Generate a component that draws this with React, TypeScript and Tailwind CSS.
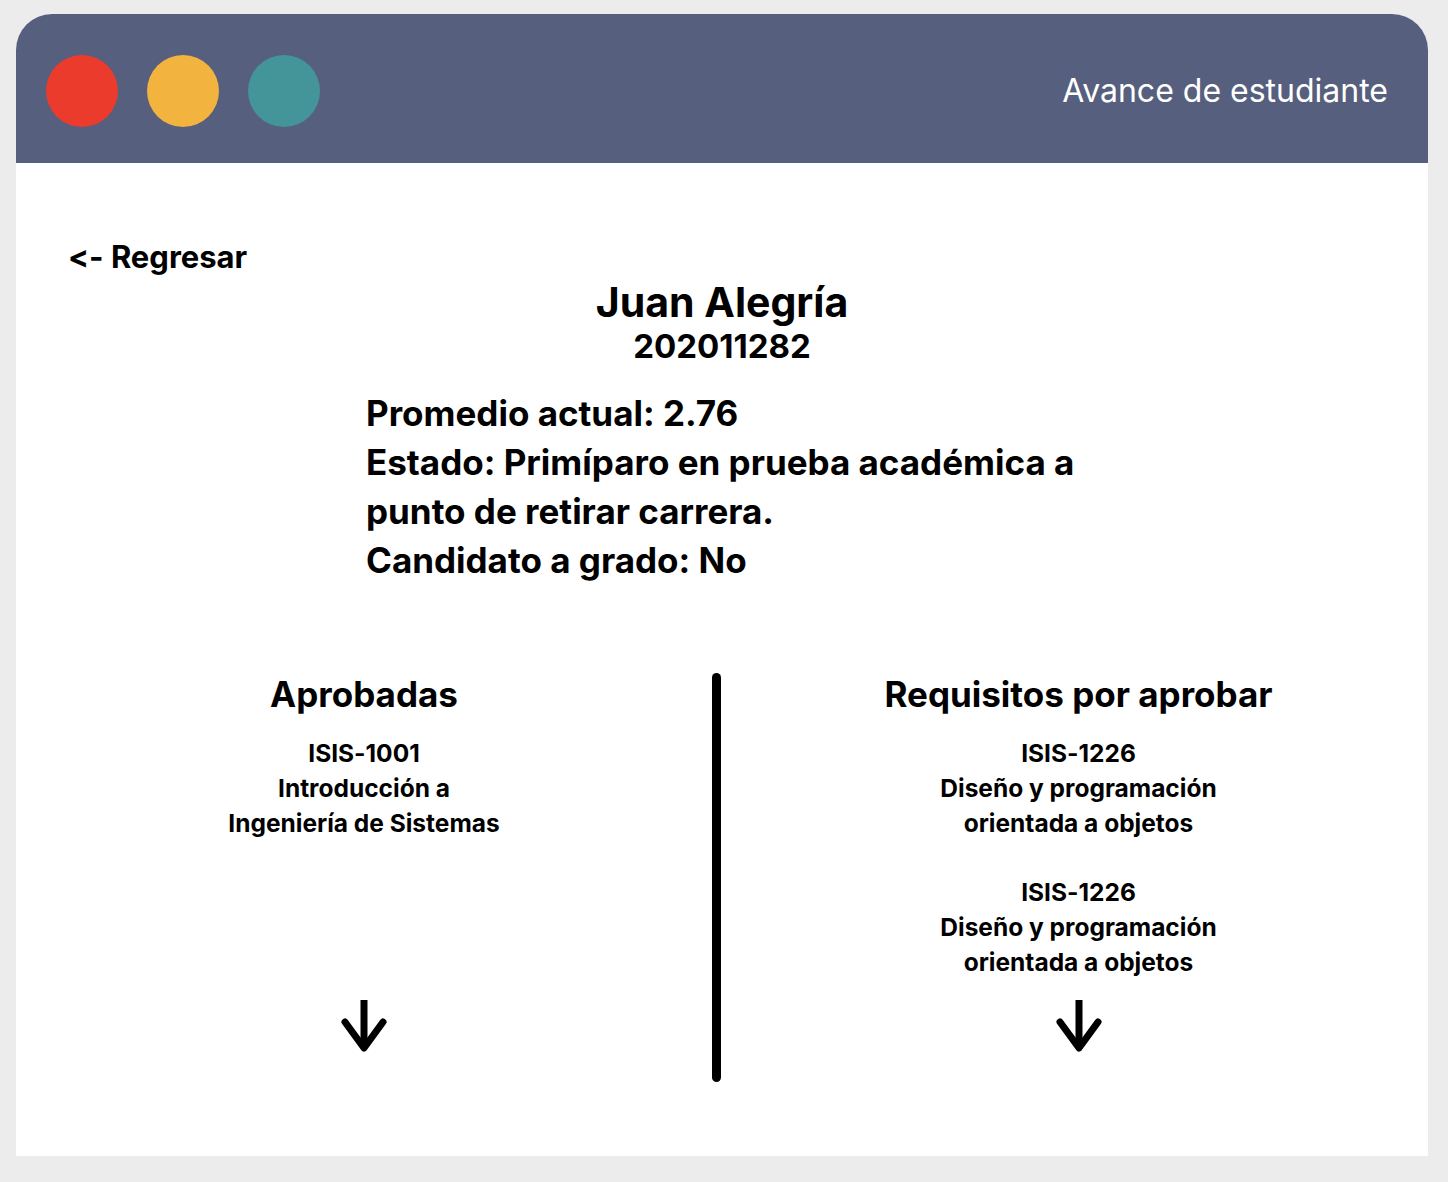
import React from "react";

const font = { fontFamily: "Inter, 'Noto Sans', sans-serif" };

function ArrowDown() {
  return (
    <svg width="48" height="54" viewBox="0 0 48 54" fill="none">
      <path d="M24 1 V48" stroke="black" strokeWidth="7" />
      <path d="M5 23 L24 49 L43 23" stroke="black" strokeWidth="7" strokeLinecap="round" strokeLinejoin="round" />
    </svg>
  );
}

function Course({ code, lines }: { code: string; lines: string[] }) {
  return (
    <div className="text-center text-[24.5px] leading-[35px] font-bold text-black">
      <p>{code}</p>
      {lines.map((l) => (
        <p key={l}>{l}</p>
      ))}
    </div>
  );
}

export default function App() {
  return (
    <div
      className="min-h-[1182px] bg-[#ececec] pt-[14px] pl-[16px] [font-feature-settings:'calt'_0,'liga'_0]"
      style={font}
    >
      <div className="w-[1412px] h-[1142px] bg-white rounded-t-[36px] overflow-hidden flex flex-col">
        {/* title bar */}
        <div className="h-[149px] bg-[#565f7e] flex items-center justify-between pl-[30px] pr-[40px] pt-[5px]">
          <div className="flex gap-[29px]">
            <div className="w-[72px] h-[72px] rounded-full bg-[#eb3b2c]" />
            <div className="w-[72px] h-[72px] rounded-full bg-[#f3b33f]" />
            <div className="w-[72px] h-[72px] rounded-full bg-[#44959a]" />
          </div>
          <span className="text-white text-[32px] font-normal">Avance de estudiante</span>
        </div>

        {/* body */}
        <div className="flex-1 flex flex-col pt-[74px]">
          <button className="self-start ml-[52px] text-[31px] leading-[40px] font-bold text-black [font-feature-settings:'calt'_0,'liga'_0]">
            {"<- Regresar"}
          </button>
          <h1 className="text-center text-[41px] leading-[48px] font-bold text-black mt-[1px]">
            Juan Alegría
          </h1>
          <p className="text-center text-[33px] leading-[40px] font-bold text-black">
            202011282
          </p>

          <div className="ml-[350px] mt-[23px] text-[35px] leading-[49px] font-bold text-black">
            <p>Promedio actual: 2.76</p>
            <p>
              Estado: Primíparo en prueba académica a
              <br />
              punto de retirar carrera.
            </p>
            <p>Candidato a grado: No</p>
          </div>

          <div className="mt-[88px] h-[409px] grid grid-cols-[696px_9px_1fr]">
            <div className="flex flex-col items-center pb-[29px]">
              <h2 className="text-[35px] leading-[42px] font-bold text-black">Aprobadas</h2>
              <div className="mt-[21px]">
                <Course code="ISIS-1001" lines={["Introducción a", "Ingeniería de Sistemas"]} />
              </div>
              <div className="mt-auto">
                <ArrowDown />
              </div>
            </div>

            <div className="bg-black rounded-full" />

            <div className="flex flex-col items-center pl-[8px] pb-[29px]">
              <h2 className="text-[35px] leading-[42px] font-bold text-black">
                Requisitos por aprobar
              </h2>
              <div className="mt-[21px]">
                <Course code="ISIS-1226" lines={["Diseño y programación", "orientada a objetos"]} />
              </div>
              <div className="mt-[34px]">
                <Course code="ISIS-1226" lines={["Diseño y programación", "orientada a objetos"]} />
              </div>
              <div className="mt-auto">
                <ArrowDown />
              </div>
            </div>
          </div>
        </div>
      </div>
    </div>
  );
}
